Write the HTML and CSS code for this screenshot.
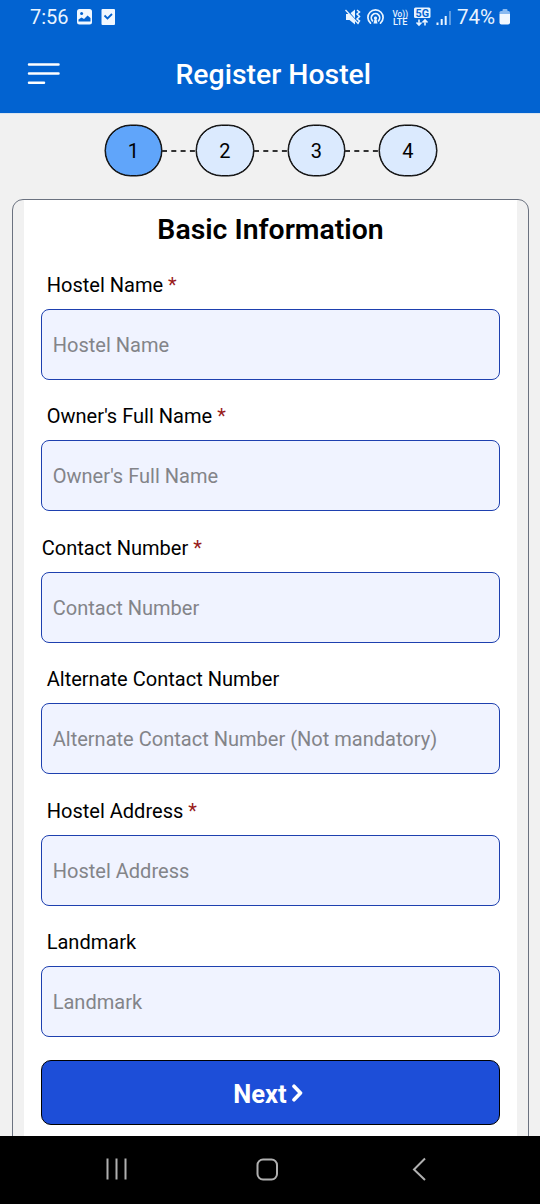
FILE: index.html
```html
<!DOCTYPE html>
<html lang="en">
<head>
<meta charset="utf-8">
<title>Register Hostel</title>
<link rel="stylesheet" href="styles.css">
</head>
<body>
<div class="screen">
  <header class="header">
    <div class="status">
      <span class="time">7:56</span>
      <svg class="left-icons" width="40" height="18" viewBox="0 0 40 18">
        <rect x="1" y="1" width="15" height="15.500" rx="2.500" fill="#f1f8ff"/>
        <circle cx="5.600" cy="5.600" r="1.500" fill="#0263d1"/>
        <path d="M2.500 13.500V11.500L5.500 9.500L8 11L11.500 7.500L14.500 10V13.500Z" fill="#0263d1"/>
        <rect x="25.500" y="1" width="13.500" height="16" rx="1" fill="#f1f8ff"/>
        <path d="M28.500 7.500L31.500 10.500L36 6" fill="none" stroke="#0263d1" stroke-width="1.800"/>
      </svg>
      <svg class="right-icons" width="108" height="24" viewBox="0 0 108 24">
        <path d="M1 9H4.500L10 4.500V19.500L4.500 15H1Z" fill="#e9f4ff"/>
        <path d="M1.500 4.500L12.500 17.500" stroke="#0263d1" stroke-width="1.400"/>
        <path d="M.5 5L13.500 19" stroke="#e9f4ff" stroke-width="1.300"/>
        <path d="M12 5L14.500 7L12 9L14.500 11.500L12 14L14.500 16L13 18" fill="none" stroke="#e9f4ff" stroke-width="1.500"/>
        <g fill="none" stroke="#e9f4ff" stroke-width="1.700" stroke-linecap="round">
          <path d="M25.500 18.200A7.600 7.600 0 1 1 35.500 18.200"/>
          <path d="M27.500 15.800A4.200 4.200 0 1 1 33.500 15.800"/>
        </g>
        <path d="M30.500 11.500A1.500 1.500 0 0 1 31.500 14.200L32.500 18.500H28.500L29.500 14.200A1.500 1.500 0 0 1 30.500 11.500Z" fill="#e9f4ff"/>
        <text x="47.500" y="11.800" class="volte" textLength="15.500" lengthAdjust="spacingAndGlyphs">Vo))</text>
        <text x="48" y="20.300" class="volte" textLength="14.500" lengthAdjust="spacingAndGlyphs">LTE</text>
        <rect x="69" y="2.500" width="16.500" height="10.500" rx="1.500" fill="#e9f4ff"/>
        <text x="70.500" y="11.500" class="five-g" textLength="13.500" lengthAdjust="spacingAndGlyphs">5G</text>
        <path d="M74 14.500V20M71.500 17.500L74 20L76.500 17.500M80 20.500V15M77.500 17.500L80 15L82.500 17.500" fill="none" stroke="#e9f4ff" stroke-width="1.600"/>
        <path d="M92.500 17.500V20M96.700 14V20M100.700 11V20" stroke="#e9f4ff" stroke-width="2"/>
        <path d="M105 6V20" stroke="#6ca5e6" stroke-width="1.700"/>
      </svg>
      <span class="percent">74%</span>
      <svg class="battery" width="12" height="18" viewBox="0 0 12 18">
        <rect x="3.500" y="1" width="5" height="3" rx="1" fill="#8abaf0"/>
        <path d="M.5 4.500Q.5 3 2 3H9.500Q11 3 11 4.500V6H.5Z" fill="#8abaf0"/>
        <path d="M.5 6H11V14.500Q11 16.500 9 16.500H2.500Q.5 16.500 .5 14.500Z" fill="#f1f8ff"/>
      </svg>
    </div>
    <div class="toolbar">
      <svg class="menu" width="34" height="24" viewBox="0 0 34 24">
        <path d="M3 2.500H32.500M3 11.500H32.500M3 20.700H18" stroke="#fff" stroke-width="2.500" stroke-linecap="round"/>
      </svg>
      <h1 class="title">Register Hostel</h1>
    </div>
  </header>
  <main class="content">
    <div class="steps">
      <span class="step active">1</span>
      <svg class="dash" width="34" height="2"><path d="M0 1H34" stroke="#333" stroke-width="1.800" stroke-dasharray="5 4.300"/></svg>
      <span class="step">2</span>
      <svg class="dash" width="34" height="2"><path d="M0 1H34" stroke="#333" stroke-width="1.800" stroke-dasharray="5 4.300"/></svg>
      <span class="step">3</span>
      <svg class="dash" width="34" height="2"><path d="M0 1H34" stroke="#333" stroke-width="1.800" stroke-dasharray="5 4.300"/></svg>
      <span class="step">4</span>
    </div>
    <section class="card">
      <form class="form">
        <h2 class="heading">Basic Information</h2>
        <div class="field"><label class="label" for="f1">Hostel Name <span class="req">*</span></label><input class="input" id="f1" placeholder="Hostel Name"></div>
        <div class="field"><label class="label" for="f2">Owner's Full Name <span class="req">*</span></label><input class="input" id="f2" placeholder="Owner's Full Name"></div>
        <div class="field"><label class="label flush" for="f3">Contact Number <span class="req">*</span></label><input class="input" id="f3" placeholder="Contact Number"></div>
        <div class="field"><label class="label" for="f4">Alternate Contact Number</label><input class="input" id="f4" placeholder="Alternate Contact Number (Not mandatory)"></div>
        <div class="field"><label class="label" for="f5">Hostel Address <span class="req">*</span></label><input class="input" id="f5" placeholder="Hostel Address"></div>
        <div class="field"><label class="label" for="f6">Landmark</label><input class="input" id="f6" placeholder="Landmark"></div>
        <button class="next" type="button"><span>Next</span><svg width="14" height="20" viewBox="0 0 14 20"><path d="M3 2.200L9.500 9L3 15.800" fill="none" stroke="#fff" stroke-width="3.600" stroke-linecap="round" stroke-linejoin="round"/></svg></button>
      </form>
    </section>
  </main>
  <nav class="navbar">
    <svg width="24" height="24" viewBox="0 0 24 24"><path d="M3.500 1.500V22.500M12.500 1.500V22.500M21.500 1.500V22.500" stroke="#b0b0b0" stroke-width="2"/></svg>
    <svg width="24" height="24" viewBox="0 0 24 24"><rect x="1.500" y="2.500" width="19.500" height="20" rx="5.500" fill="none" stroke="#b0b0b0" stroke-width="2"/></svg>
    <svg width="24" height="24" viewBox="0 0 24 24"><path d="M18 1.500L7 12.500L18 23" fill="none" stroke="#b0b0b0" stroke-width="2"/></svg>
  </nav>
</div>
</body>
</html>
```
FILE: styles.css
```css
* { box-sizing: border-box; }
body { margin: 0; font-family: Roboto, sans-serif; color: #000; }
.screen { width: 540px; height: 1204px; display: flex; flex-direction: column; overflow: hidden; background: #f1f1f1; }
.header { height: 113px; flex: none; background: #0263d1; color: #fff; }
.status { height: 34px; display: flex; align-items: center; padding: 0 29px 0 30px; color: #e9f4ff; }
.time { width: 46px; font-size: 20px; }
.right-icons { margin: 0 4px 0 auto; }
.volte { font: 500 8.500px Roboto, sans-serif; fill: #e9f4ff; }
.five-g { font: 700 10.500px Roboto, sans-serif; fill: #0263d1; }
.percent { width: 42px; font-size: 20.500px; }
.battery { flex: none; }
.toolbar { height: 79px; display: grid; grid-template-columns: 150px 1fr; align-items: center; padding-left: 25.500px; }
.title { margin: 2px 0 0; font-size: 28.400px; font-weight: 500; line-height: 36px; }
.content { flex: 1; min-height: 0; overflow: hidden; padding: 10px 11px 0 12px; border-top: 1px solid #d9e4ef; }
.steps { height: 53px; display: flex; justify-content: center; align-items: center; }
.step { width: 57.500px; height: 51px; border: 1px solid #111; box-shadow: 0 0 0 .5px #111; border-radius: 26px; background: #dbeafe; font-size: 20px; display: flex; align-items: center; justify-content: center; }
.step.active { background: #60a5fa; }
.card { height: 1000px; margin-top: 22px; padding: 0 11px; border: 1px solid #6b7280; border-radius: 11px; }
.form { height: 100%; padding: 11px 17px 0; background: #fff; }
.heading { margin: 0 0 18.600px; font-size: 28.400px; font-weight: 600; line-height: 38px; text-align: center; }
.field { height: 131.500px; }
.label { display: block; height: 41px; padding-left: 5.700px; font-size: 20.050px; line-height: 34px; }
.label.flush { padding-left: .7px; }
.req { color: #991b1b; }
.input { display: block; width: 100%; height: 71px; padding: 1px 10px 0 10.700px; border: 1px solid #1e40af; border-radius: 8px; background: #f0f3ff; font: 20.050px Roboto, sans-serif; }
.input::placeholder { color: #838489; opacity: 1; }
.next { width: 100%; height: 65px; margin-top: 3px; padding: 3px 9px 0 6px; display: flex; align-items: center; justify-content: center; gap: 4px; border: 1px solid #000; border-radius: 10px; background: #1d4ed8; color: #fff; font: 700 25.500px Roboto, sans-serif; }
.navbar { height: 68px; flex: none; display: flex; align-items: center; justify-content: space-between; padding: 0 109px 2px 104px; background: #000; }
```
